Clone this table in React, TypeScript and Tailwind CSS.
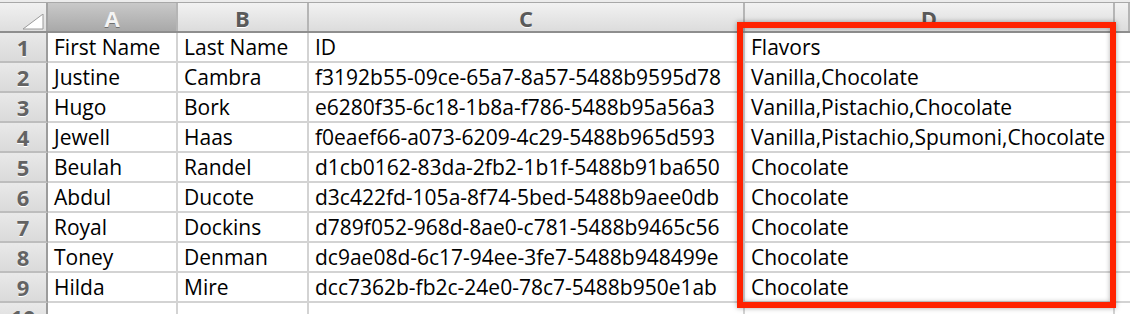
import React from 'react';

const rows = [
  ['First Name', 'Last Name', 'ID', 'Flavors'],
  ['Justine', 'Cambra', 'f3192b55-09ce-65a7-8a57-5488b9595d78', 'Vanilla,Chocolate'],
  ['Hugo', 'Bork', 'e6280f35-6c18-1b8a-f786-5488b95a56a3', 'Vanilla,Pistachio,Chocolate'],
  ['Jewell', 'Haas', 'f0eaef66-a073-6209-4c29-5488b965d593', 'Vanilla,Pistachio,Spumoni,Chocolate'],
  ['Beulah', 'Randel', 'd1cb0162-83da-2fb2-1b1f-5488b91ba650', 'Chocolate'],
  ['Abdul', 'Ducote', 'd3c422fd-105a-8f74-5bed-5488b9aee0db', 'Chocolate'],
  ['Royal', 'Dockins', 'd789f052-968d-8ae0-c781-5488b9465c56', 'Chocolate'],
  ['Toney', 'Denman', 'dc9ae08d-6c17-94ee-3fe7-5488b948499e', 'Chocolate'],
  ['Hilda', 'Mire', 'dcc7362b-fb2c-24e0-78c7-5488b950e1ab', 'Chocolate'],
  ['', '', '', ''],
];

const cols = 'grid grid-cols-[48px_130px_131px_436px_370px_1fr]';

export default function App() {
  return (
    <div className="relative h-[314px] w-[1130px] overflow-hidden bg-white font-['Open_Sans',sans-serif]">
      <div className="h-[3px] border-b border-[#a8a8a8] bg-[#ececec]" />

      {/* column headers */}
      <div className={`${cols} h-[30px] border-b-2 border-[#8e8e8e]`}>
        <div className="relative border-r-2 border-[#a3a3a3] bg-gradient-to-b from-[#f1f1f1] to-[#dedede]">
          <svg className="absolute bottom-[1px] right-[2px]" width="22" height="16" viewBox="0 0 22 16">
            <polygon points="21,0 21,15 1,15" fill="#fff" stroke="#9a9a9a" strokeWidth="1" />
          </svg>
        </div>
        {['A', 'B', 'C', 'D', ''].map((l, i) => (
          <div
            key={i}
            className={
              'flex items-center justify-center border-r-2 border-[#b5b5b5] pt-[1px] text-[22px] font-bold leading-none ' +
              (i === 0
                ? 'bg-gradient-to-b from-[#c9c9c9] to-[#a9a9a9] text-[#f4f4f4] [text-shadow:0_1px_0_#6f6f6f]'
                : 'bg-gradient-to-b from-[#f2f2f2] to-[#dcdcdc] text-[#5a5a5a] [text-shadow:0_1px_0_#fff]')
            }
          >
            {l}
          </div>
        ))}
      </div>

      {rows.map((r, i) => (
        <div key={i} className={`${cols} h-[30px]`}>
          <div className="flex items-center justify-center border-r-2 border-b-2 border-r-[#9c9c9c] border-b-[#bdbdbd] bg-gradient-to-b from-[#e9e9e9] to-[#dadada] text-[22px] font-bold leading-none text-[#636363] [text-shadow:0_1px_0_#fff]">
            {i + 1}
          </div>
          {r.map((c, j) => (
            <div
              key={j}
              className="flex items-center overflow-hidden whitespace-nowrap border-r-2 border-b-2 border-[#d3d3d3] pl-[6px] text-[21px] leading-none text-black"
            >
              {c}
            </div>
          ))}
          <div className="border-b-2 border-[#d3d3d3]" />
        </div>
      ))}

      {/* highlight around the Flavors column */}
      <div className="absolute left-[737px] top-[22px] h-[286px] w-[379px] border-[6px] border-[#ff2200] shadow-[0_0_5px_rgba(0,0,0,0.35),inset_0_0_5px_rgba(0,0,0,0.3)]" />
    </div>
  );
}
